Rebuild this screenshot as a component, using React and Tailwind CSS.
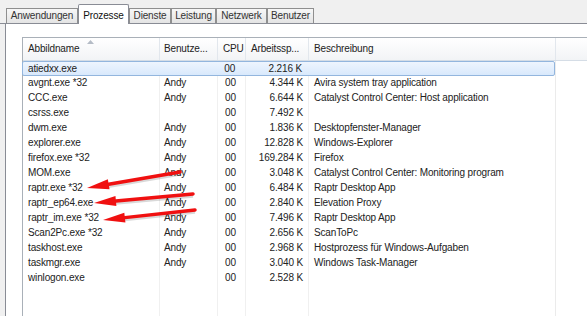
import React from 'react';

const rows = [
  ['atiedxx.exe', '', '00', '2.216 K', ''],
  ['avgnt.exe *32', 'Andy', '00', '4.344 K', 'Avira system tray application'],
  ['CCC.exe', 'Andy', '00', '6.644 K', 'Catalyst Control Center: Host application'],
  ['csrss.exe', '', '00', '7.492 K', ''],
  ['dwm.exe', 'Andy', '00', '1.836 K', 'Desktopfenster-Manager'],
  ['explorer.exe', 'Andy', '00', '12.828 K', 'Windows-Explorer'],
  ['firefox.exe *32', 'Andy', '00', '169.284 K', 'Firefox'],
  ['MOM.exe', 'Andy', '00', '3.048 K', 'Catalyst Control Center: Monitoring program'],
  ['raptr.exe *32', 'Andy', '00', '6.484 K', 'Raptr Desktop App'],
  ['raptr_ep64.exe', 'Andy', '00', '2.840 K', 'Elevation Proxy'],
  ['raptr_im.exe *32', 'Andy', '00', '7.496 K', 'Raptr Desktop App'],
  ['Scan2Pc.exe *32', 'Andy', '00', '2.656 K', 'ScanToPc'],
  ['taskhost.exe', 'Andy', '00', '2.968 K', 'Hostprozess für Windows-Aufgaben'],
  ['taskmgr.exe', 'Andy', '00', '3.040 K', 'Windows Task-Manager'],
  ['winlogon.exe', '', '00', '2.528 K', ''],
];

const tabs = [
  { name: 'Anwendungen', w: 'w-[72px]' },
  { name: 'Prozesse', w: 'w-[51px]', active: true },
  { name: 'Dienste', w: 'w-[42px]' },
  { name: 'Leistung', w: 'w-[45px]' },
  { name: 'Netzwerk', w: 'w-[51px]' },
  { name: 'Benutzer', w: 'w-[47px]' },
];

const Arrow = ({ x1, y1, x2, y2 }) => {
  const dx = x2 - x1;
  const dy = y2 - y1;
  const len = Math.hypot(dx, dy);
  const ux = dx / len;
  const uy = dy / len;
  const bx = x2 - ux * 22;
  const by = y2 - uy * 22;
  const px = -uy * 5;
  const py = ux * 5;
  return (
    <g>
      <line x1={x1} y1={y1 + 2} x2={bx} y2={by + 2} stroke="rgba(0,0,0,0.15)" strokeWidth="3.5" />
      <line x1={x1} y1={y1} x2={bx} y2={by} stroke="#f01010" strokeWidth="3.5" strokeLinecap="round" />
      <polygon points={`${x2},${y2} ${bx + px},${by + py} ${bx - px},${by - py}`} fill="#f01010" />
    </g>
  );
};

export default function App() {
  return (
    <div
      className="relative w-[587px] h-[316px] overflow-hidden bg-[#f0f0f0] flex flex-col text-[10px] tracking-[-0.15px] text-[#222]"
      style={{ fontFamily: '"Liberation Sans", Arial, sans-serif' }}
    >
      {/* Tab strip */}
      <div className="flex items-end h-[24px] pl-[6px] border-b border-[#898c95]">
        {tabs.map((t) =>
          t.active ? (
            <div
              key={t.name}
              className={t.w + ' h-[20px] -mb-px pt-[3px] text-center bg-white border border-b-0 border-[#898c95] rounded-t-[2px] text-[#111]'}
            >
              {t.name}
            </div>
          ) : (
            <div
              key={t.name}
              className={t.w + ' h-[15px] leading-[14px] text-center bg-gradient-to-b from-[#f7f7f7] to-[#e4e4e4] border border-b-0 border-[#8f8f8f] text-[#333]'}
            >
              {t.name}
            </div>
          )
        )}
      </div>

      {/* Panel */}
      <div className="flex-1 ml-[5px] bg-white border-l border-[#898c95] pl-[16px] pt-[13px] flex flex-col">
        <div className="flex-1 border-l border-t border-[#a9b0b8] flex flex-col">
          {/* Header */}
          <div className="relative flex h-[23px] leading-[22px] bg-gradient-to-b from-white to-[#f2f4f6] border-b border-[#d5dde6] text-[#222]">
            <div className="w-[137px] pl-[5px] border-r border-[#e2e7ed]">Abbildname</div>
            <div className="w-[58px] pl-[4px] border-r border-[#e2e7ed]">Benutze...</div>
            <div className="w-[28px] pl-[5px] border-r border-[#e2e7ed]">CPU</div>
            <div className="w-[63px] pl-[5px] border-r border-[#e2e7ed]">Arbeitssp...</div>
            <div className="w-[247px] pl-[5px] border-r border-[#e2e7ed]">Beschreibung</div>
            <div className="flex-1" />
            <svg className="absolute left-[64px] top-[2px]" width="7" height="4" viewBox="0 0 7 4">
              <polygon points="3.5,0 7,4 0,4" fill="#b5bcc6" />
            </svg>
          </div>

          {/* Rows */}
          <div className="relative flex-1">
            <div className="absolute inset-0 flex pointer-events-none">
              <div className="w-[137px] border-r border-[#f0f0f0]" />
              <div className="w-[58px] border-r border-[#f0f0f0]" />
              <div className="w-[28px] border-r border-[#f0f0f0]" />
              <div className="w-[63px] border-r border-[#f0f0f0]" />
              <div className="w-[247px] border-r border-[#ebebeb]" />
            </div>
            {rows.map((r, i) => (
              <div
                key={r[0]}
                className={
                  'relative flex h-[15px] leading-[14px] w-[533px] ' +
                  (i === 0
                    ? 'bg-gradient-to-b from-[#eef5fe] to-[#d9e9fc] border border-[#93b6de] rounded-[2px] -ml-px'
                    : '')
                }
              >
                <div className="w-[137px] pl-[5px]">{r[0]}</div>
                <div className="w-[58px] pl-[4px]">{r[1]}</div>
                <div className="w-[28px] pl-[7px]">{r[2]}</div>
                <div className="w-[63px] pr-[6px] text-right">{r[3]}</div>
                <div className="w-[247px] pl-[5px] whitespace-nowrap">{r[4]}</div>
              </div>
            ))}
          </div>
        </div>
      </div>

      {/* Annotation arrows */}
      <svg className="absolute inset-0 pointer-events-none" width="587" height="316">
        <Arrow x1={180} y1={172} x2={87} y2={188} />
        <Arrow x1={193} y1={194} x2={94} y2={203} />
        <Arrow x1={195} y1={210} x2={103} y2={220} />
      </svg>
    </div>
  );
}
